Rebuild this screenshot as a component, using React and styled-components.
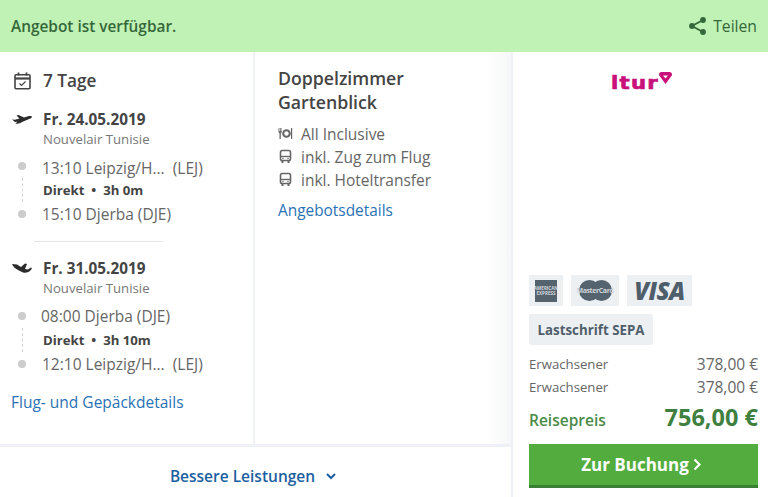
import React from "react";
import styled, { createGlobalStyle } from "styled-components";

const Global = createGlobalStyle`
  html, body { margin: 0; padding: 0; background: #fff; }
  body { font-family: "Open Sans", "Noto Sans", sans-serif; color: #555; }
  * { box-sizing: border-box; }
`;

const Page = styled.div`
  width: 768px;
  height: 497px;
  overflow: hidden;
  display: flex;
  flex-direction: column;
`;
const Banner = styled.div`
  height: 52px;
  flex: none;
  background: #c1f2b5;
  color: #34683a;
  display: flex;
  align-items: center;
  justify-content: space-between;
  padding: 0 11px 0 11px;
`;
const BannerTitle = styled.div`
  font-size: 15.4px;
  font-weight: 600;
`;
const Share = styled.div`
  display: flex;
  align-items: center;
  gap: 7px;
  font-size: 15.7px;
`;
const Body = styled.div`
  flex: 1;
  display: flex;
  min-height: 0;
`;
const LeftArea = styled.div`
  width: 511px;
  flex: none;
  display: flex;
  flex-direction: column;
`;
const Columns = styled.div`
  height: 392px;
  flex: none;
  display: flex;
`;
const FlightCol = styled.div`
  width: 255px;
  flex: none;
  padding: 16px 0 0 11px;
  border-right: 2px solid #eef1f5;
`;
const HotelCol = styled.div`
  flex: 1;
  padding: 14px 16px 0 23px;
  background: linear-gradient(to right, #fff 90%, #f6f7f8 100%);
`;
const DaysRow = styled.div`
  display: flex;
  align-items: center;
  gap: 12px;
  height: 25px;
  padding-left: 3px;
  font-size: 17.2px;
  font-weight: 600;
  color: #444;
`;
const FlightHead = styled.div`
  display: flex;
  align-items: center;
  height: 20px;
  margin-top: ${(p) => p.$top}px;
  font-size: 15.3px;
  font-weight: 700;
  color: #444;
`;
const PlaneSlot = styled.div`
  width: 32px;
  flex: none;
  display: flex;
  align-items: center;
  margin-left: 1px;
  margin-right: -1px;
`;
const Carrier = styled.div`
  height: 18px;
  line-height: 18px;
  margin: 1px 0 0 32px;
  font-size: 13.2px;
  color: #777;
`;
const Route = styled.div`
  display: flex;
  flex-direction: column;
  margin-top: ${(p) => p.$top}px;
`;
const Stop = styled.div`
  display: flex;
  align-items: center;
  height: 24px;
  font-size: 15.5px;
  color: #666;
`;
const Dot = styled.span`
  width: 8px;
  height: 8px;
  border-radius: 50%;
  background: #ccc;
  margin: -1px 0 0 7px;
  flex: none;
`;
const StopTime = styled.span`
  margin-left: ${(p) => p.$left || 16}px;
  padding-top: ${(p) => p.$drop || 0}px;
  white-space: pre;
`;
const Leg = styled.div`
  display: flex;
  align-items: center;
  height: 24px;
  margin-left: 32px;
  font-size: 13.2px;
  font-weight: 700;
  color: #444;
  position: relative;
  white-space: pre;
  &::before {
    content: "";
    position: absolute;
    left: -21px;
    top: 0;
    height: 24px;
    border-left: 1px dashed #d4d4d4;
  }
`;
const Rule = styled.div`
  width: 129px;
  height: 1px;
  background: #e2e4e6;
  margin: 15px 0 0 23px;
`;
const Link = styled.a`
  display: block;
  font-size: ${(p) => p.$size}px;
  color: #2a72b5;
  margin-top: ${(p) => p.$top}px;
  line-height: 20px;
`;
const RoomTitle = styled.div`
  font-size: 17.7px;
  font-weight: 600;
  line-height: 24px;
  color: #444;
  margin-bottom: 8px;
`;
const Feature = styled.div`
  display: flex;
  align-items: center;
  height: 23px;
  gap: 8px;
  font-size: 15.5px;
  color: #666;
`;
const FooterBar = styled.div`
  flex: 1;
  border-top: 3px solid #eef1f5;
  display: flex;
  align-items: center;
  justify-content: center;
  gap: 10px;
  padding: 7px 4px 0 0;
  font-size: 15.5px;
  font-weight: 600;
  color: #1b5fa0;
`;
const PriceCol = styled.div`
  flex: 1;
  border-left: 2px solid #eef1f5;
  padding: 0 10px 0 16px;
  display: flex;
  flex-direction: column;
`;
const LogoRow = styled.div`
  height: 223px;
  flex: none;
  display: flex;
  justify-content: center;
  align-items: flex-start;
  padding: 21px 4px 0 0;
`;
const LogoText = styled.span`
  font-family: "DejaVu Sans", sans-serif;
  font-weight: 700;
  font-size: 17px;
  line-height: 20px;
  color: #c8117a;
  letter-spacing: 1px;
  -webkit-text-stroke: 0.6px #c8117a;
  transform: scaleX(1.25);
  transform-origin: left center;
  margin-right: 9px;
`;
const GemWrap = styled.span`
  display: flex;
  margin: -1px 0 0 1px;
`;
const Cards = styled.div`
  display: flex;
  gap: 8px;
`;
const CardBadge = styled.div`
  height: 31px;
  width: ${(p) => p.$w}px;
  background: #edf0f3;
  display: flex;
  align-items: center;
  justify-content: center;
  color: #4f5e6b;
`;
const AmexBox = styled.div`
  width: 22px;
  height: 22px;
  background: #55636f;
  color: #d3d8dc;
  font-size: 4.5px;
  font-weight: 700;
  line-height: 5px;
  text-align: center;
  display: flex;
  align-items: center;
  justify-content: center;
`;
const MasterLogo = styled.div`
  position: relative;
  width: 33px;
  height: 21px;
  display: flex;
  align-items: center;
  justify-content: center;
  color: #cfd5da;
  font-size: 7px;
  font-weight: 700;
  & > svg { position: absolute; inset: 0; }
  & > span { position: relative; letter-spacing: -0.4px; }
`;
const VisaText = styled.span`
  font-size: 24px;
  font-weight: 800;
  font-style: italic;
  letter-spacing: -0.5px;
`;
const Sepa = styled.div`
  margin-top: 8px;
  width: 124px;
  height: 31px;
  border-radius: 2px;
  background: #edf0f3;
  display: flex;
  align-items: center;
  justify-content: center;
  font-size: 13.3px;
  font-weight: 700;
  color: #4f5e6b;
`;
const PriceRows = styled.div`
  margin-top: 7px;
`;
const PriceRow = styled.div`
  display: flex;
  justify-content: space-between;
  align-items: center;
  height: 23px;
  font-size: 13.2px;
  color: #666;
`;
const PriceAmount = styled.span`
  font-size: 15.5px;
`;
const TotalRow = styled.div`
  display: flex;
  justify-content: space-between;
  align-items: center;
  height: 36px;
  margin-top: 1px;
  color: #4a8a49;
`;
const TotalLabel = styled.span`
  font-size: 15.5px;
  font-weight: 600;
  padding-top: 5px;
`;
const TotalAmount = styled.span`
  font-size: 23.5px;
  font-weight: 700;
  color: #3f7f40;
`;
const BookButton = styled.button`
  margin-top: 9px;
  width: 100%;
  height: 44px;
  border: 0;
  border-bottom: 3px solid #3a8034;
  background: #52ac3e;
  color: #fff;
  font-family: inherit;
  font-size: 17px;
  font-weight: 700;
  display: flex;
  align-items: center;
  justify-content: center;
  gap: 4px;
  padding: 0 4px 0 0;
`;

const ShareIcon = () => (
  <svg width="17" height="18" viewBox="0 0 17 18" fill="#34683a">
    <circle cx="14" cy="3" r="2.9" />
    <circle cx="3" cy="9" r="2.9" />
    <circle cx="14" cy="15" r="2.9" />
    <path d="M14 3 3 9l11 6" fill="none" stroke="#34683a" strokeWidth="1.8" />
  </svg>
);
const CalendarIcon = () => (
  <svg width="17" height="18" viewBox="0 0 17 18" fill="none" stroke="#444">
    <rect x="1" y="2.8" width="15" height="14" rx="1" strokeWidth="1.6" />
    <path d="M1 6.500h15" strokeWidth="2.200" />
    <path d="M4.500 .6v3M12.500 .6v3" strokeWidth="1.800" />
    <path d="m5.500 11.500 2 2 4-4" strokeWidth="1.200" />
  </svg>
);
const DepartIcon = () => (
  <svg width="20" height="11" viewBox="0 0 20 11" fill="#2b2b2b">
    <path d="M0 5.500 3 5.800 7.500 4.500 4.500 1.500 6.500 1 12 3.500 17 2C19 1.700 20 2.200 20 3 20 3.800 18.500 4.500 16 5.500L10 8C8 9.500 5.500 10 3.500 9.500L5.500 7.800 3 8Z" />
  </svg>
);
const ReturnIcon = () => (
  <svg width="20" height="12" viewBox="0 0 20 12" fill="#2b2b2b">
    <path d="M0 2 5 2.500 9 5 13 1.500 15 2 13 7 16 7.500 19 5.500 20 6.500 18 9C16 10.500 14 11 11 10.500L6 8C3 6.500 1 4.500 0 2Z" />
  </svg>
);
const PlateIcon = () => (
  <svg width="15" height="13" viewBox="0 0 15 13" fill="#666">
    <path d="M.5 1v3.500c0 .9.500 1.500 1 1.700V12h1.300V6.200c.5-.2 1-.8 1-1.700V1H3.300v3H2.700V1H2v3H1.400V1z" />
    <path d="M13 1v11h1.200V1z" />
    <circle cx="8.500" cy="6.500" r="4.300" />
    <circle cx="8.500" cy="6.500" r="2.200" fill="#fff" />
  </svg>
);
const BusIcon = () => (
  <svg width="15" height="15" viewBox="0 0 15 15" fill="none" stroke="#666" strokeWidth="1.600">
    <rect x="2.500" y="1.500" width="10" height="10" rx="1.800" />
    <path d="M2.500 7.500h10" strokeWidth="1.400" />
    <path d="M4.500 12v2M10.500 12v2" strokeWidth="2" />
    <circle cx="5" cy="9.500" r=".7" fill="#666" stroke="none" />
    <circle cx="10" cy="9.500" r=".7" fill="#666" stroke="none" />
  </svg>
);
const Chevron = () => (
  <svg width="12" height="12" viewBox="0 0 12 12" fill="none" stroke="#1b5fa0" strokeWidth="2">
    <path d="m2 4 4 4 4-4" />
  </svg>
);
const ChevronRight = () => (
  <svg width="9" height="13" viewBox="0 0 9 13" fill="none" stroke="#fff" strokeWidth="2.200">
    <path d="m1.500 1.500 5 5-5 5" />
  </svg>
);
const GemIcon = () => (
  <svg width="13" height="12" viewBox="0 0 13 12">
    <path d="M2.500 0h8c1.500 0 2.500 1 2.500 2.500 0 .9-.4 1.500-1 2.100L6.500 12 1 4.600C.4 4 0 3.400 0 2.500 0 1 1 0 2.500 0z" fill="#c8117a" />
    <path d="M4 3.400h5L6.500 6.500z" fill="#fff" />
  </svg>
);

const Flight = ({ icon, date, top, first, leg, last, firstLeft, drop, routeTop }) => (
  <>
    <FlightHead $top={top}>
      <PlaneSlot>{icon}</PlaneSlot>
      {date}
    </FlightHead>
    <Carrier>Nouvelair Tunisie</Carrier>
    <Route $top={routeTop}>
      <Stop><Dot /><StopTime $left={firstLeft} $drop={drop}>{first}</StopTime></Stop>
      <Leg>{leg}</Leg>
      <Stop><Dot /><StopTime>{last}</StopTime></Stop>
    </Route>
  </>
);

export default function App() {
  return (
    <Page>
      <Global />
      <Banner>
        <BannerTitle>Angebot ist verfügbar.</BannerTitle>
        <Share><ShareIcon />Teilen</Share>
      </Banner>
      <Body>
        <LeftArea>
          <Columns>
            <FlightCol>
              <DaysRow><CalendarIcon />7 Tage</DaysRow>
              <Flight icon={<DepartIcon />} date="Fr. 24.05.2019" top={16} routeTop={6} drop={4}
                first="13:10 Leipzig/H...  (LEJ)" leg="Direkt  •  3h 0m" last="15:10 Djerba (DJE)" />
              <Rule />
              <Flight icon={<ReturnIcon />} date="Fr. 31.05.2019" top={16} routeTop={7}
                first="08:00 Djerba (DJE)" firstLeft={15} leg="Direkt  •  3h 10m" last="12:10 Leipzig/H...  (LEJ)" />
              <Link $top={16} $size={15.5}>Flug- und Gepäckdetails</Link>
            </FlightCol>
            <HotelCol>
              <RoomTitle>Doppelzimmer<br />Gartenblick</RoomTitle>
              <Feature><PlateIcon />All Inclusive</Feature>
              <Feature><BusIcon />inkl. Zug zum Flug</Feature>
              <Feature><BusIcon />inkl. Hoteltransfer</Feature>
              <Link $top={10} $size={15.4}>Angebotsdetails</Link>
            </HotelCol>
          </Columns>
          <FooterBar>Bessere Leistungen <Chevron /></FooterBar>
        </LeftArea>
        <PriceCol>
          <LogoRow><LogoText>ltur</LogoText><GemWrap><GemIcon /></GemWrap></LogoRow>
          <Cards>
            <CardBadge $w={34}><AmexBox>AMERICAN<br />EXPRESS</AmexBox></CardBadge>
            <CardBadge $w={48}>
              <MasterLogo>
                <svg width="33" height="21" viewBox="0 0 33 21" fill="#55636f">
                  <circle cx="10.500" cy="10.500" r="10.500" />
                  <circle cx="22.500" cy="10.500" r="10.500" />
                </svg>
                <span>MasterCard</span>
              </MasterLogo>
            </CardBadge>
            <CardBadge $w={65}><VisaText>VISA</VisaText></CardBadge>
          </Cards>
          <Sepa>Lastschrift SEPA</Sepa>
          <PriceRows>
            <PriceRow>Erwachsener<PriceAmount>378,00 €</PriceAmount></PriceRow>
            <PriceRow>Erwachsener<PriceAmount>378,00 €</PriceAmount></PriceRow>
          </PriceRows>
          <TotalRow><TotalLabel>Reisepreis</TotalLabel><TotalAmount>756,00 €</TotalAmount></TotalRow>
          <BookButton>Zur Buchung <ChevronRight /></BookButton>
        </PriceCol>
      </Body>
    </Page>
  );
}
